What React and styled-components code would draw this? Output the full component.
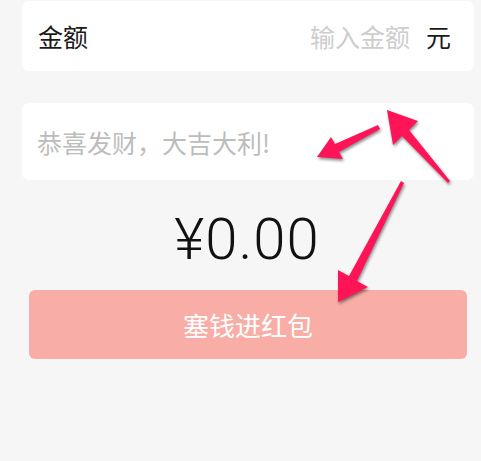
import React from 'react';
import styled, { createGlobalStyle } from 'styled-components';

const GlobalStyle = createGlobalStyle`
  html, body {
    margin: 0;
    padding: 0;
    background: #f6f6f6;
  }
  body {
    font-family: "Noto Sans CJK SC", "Noto Sans", sans-serif;
  }
`;

const App = () => {
  return (
    <>
      <GlobalStyle />
      <Page>
        <Card height={70}>
          <Label>金额</Label>
          <AmountInput placeholder="输入金额" />
          <Unit>元</Unit>
        </Card>
        <Card height={77} gap={32}>
          <NoteInput placeholder="恭喜发财，大吉大利!" />
        </Card>
        <Total>¥0.00</Total>
        <SubmitButton type="button">塞钱进红包</SubmitButton>
        <Arrows width="481" height="461" viewBox="0 0 481 461">
          <polygon points="317,157 331,137 335,144 378,125 380,129 339,152 343,159" />
          <polygon points="387,110 418,121 409,130 450,181 448,183 402,136 393,145" />
          <polygon points="338,302 338,270 349,276 401,181 404,183 357,281 368,287" />
        </Arrows>
      </Page>
    </>
  );
};

export default App;

// STYLING
const Page = styled.div`
  position: relative;
  width: 481px;
  height: 461px;
  padding: 1px 7px 0 22px;
  box-sizing: border-box;
  display: flex;
  flex-direction: column;
`;

const Card = styled.div`
  height: ${(p) => p.height}px;
  margin-top: ${(p) => p.gap || 0}px;
  background: #ffffff;
  border-radius: 7px;
  display: flex;
  align-items: center;
  padding: 0 23px 0 16px;
  box-sizing: border-box;
`;

const Label = styled.span`
  flex: 1;
  font-size: 25px;
  color: #1a1a1a;
`;

const AmountInput = styled.input`
  width: 110px;
  border: none;
  outline: none;
  background: transparent;
  text-align: right;
  font-family: inherit;
  font-size: 25px;
  color: #1a1a1a;
  padding: 0;
  &::placeholder {
    color: #cdcdcd;
  }
`;

const Unit = styled.span`
  margin-left: 16px;
  font-size: 25px;
  color: #1a1a1a;
`;

const NoteInput = styled.input`
  flex: 1;
  border: none;
  outline: none;
  background: transparent;
  font-family: inherit;
  font-size: 25px;
  color: #1a1a1a;
  padding: 0;
  margin-left: -1px;
  &::placeholder {
    color: #bcbcbc;
  }
`;

const Total = styled.div`
  margin-top: 24px;
  margin-right: 2px;
  text-align: center;
  font-family: Roboto, "Noto Sans", sans-serif;
  font-weight: 300;
  font-size: 58px;
  letter-spacing: 1px;
  line-height: 70px;
  color: #111111;
`;

const SubmitButton = styled.button`
  margin: 16px 7px 0 7px;
  height: 69px;
  border: none;
  border-radius: 6px;
  background: #f8aea6;
  color: #ffffff;
  font-family: "Noto Sans CJK SC", sans-serif;
  font-size: 26px;
  cursor: pointer;
`;

const Arrows = styled.svg`
  position: absolute;
  left: 0;
  top: 0;
  pointer-events: none;
  polygon {
    fill: #ff1458;
    filter: drop-shadow(1px 2px 1.5px rgba(0, 0, 0, 0.45));
  }
`;
